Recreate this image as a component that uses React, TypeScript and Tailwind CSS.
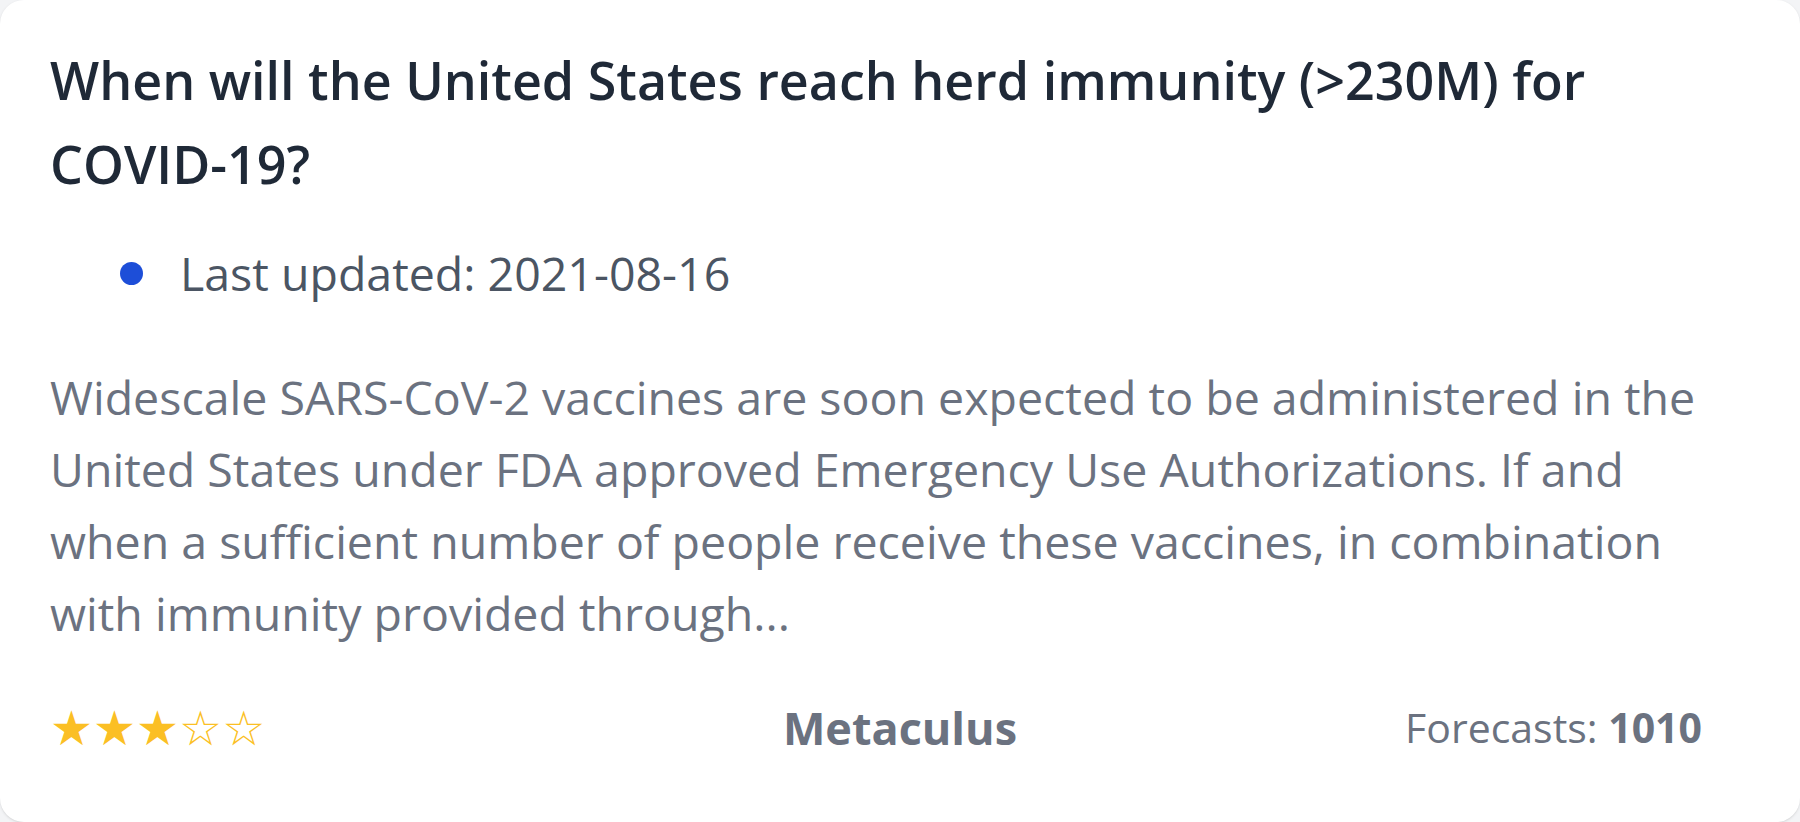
import React from 'react';

function Stars({ value }: { value: number }) {
  return (
    <div className="flex text-[48px] leading-none text-[#fbbf24] font-['DejaVu_Sans',sans-serif]">
      {[1, 2, 3, 4, 5].map((i) => (
        <span key={i}>{i <= value ? '★' : '☆'}</span>
      ))}
    </div>
  );
}

export default function App() {
  return (
    <div className="h-screen w-full bg-[#f3f4f6] font-['Open_Sans',sans-serif]">
      <div className="flex h-full w-full flex-col rounded-[24px] bg-white px-[50px] pt-[38px] shadow-sm">
        <h1 className="text-[52px] font-semibold leading-[84px] text-[#1f2937]">
          When will the United States reach herd immunity (&gt;230M) for COVID-19?
        </h1>

        <div className="mt-[32px] flex items-center gap-[37px] pl-[70px]">
          <span className="h-[23px] w-[23px] rounded-full bg-[#1d4ed8]" />
          <span className="text-[46.5px] leading-[70px] text-[#4b5563]">Last updated: 2021-08-16</span>
        </div>

        <p className="mt-[53px] text-[46.5px] font-normal leading-[72px] text-[#6b7280]">
          Widescale SARS-CoV-2 vaccines are soon expected to be administered in the United States under FDA
          approved Emergency Use Authorizations. If and when a sufficient number of people receive these
          vaccines, in combination with immunity provided through...
        </p>

        <div className="mt-[45px] grid grid-cols-3 items-center">
          <Stars value={3} />
          <div className="text-center text-[45px] font-bold text-[#6b7280]">Metaculus</div>
          <div className="pr-[48px] text-right text-[41px] text-[#6b7280]">
            Forecasts: <span className="font-bold">1010</span>
          </div>
        </div>
      </div>
    </div>
  );
}
